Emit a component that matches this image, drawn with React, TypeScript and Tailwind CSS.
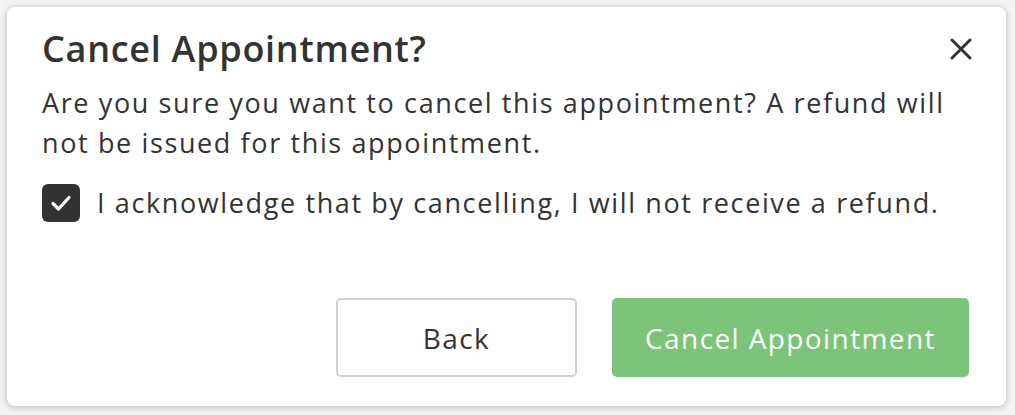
import React from 'react';

const App = () => {
  return (
    <div className="w-[1015px] h-[415px] bg-[#f3f3f3] p-[7px]" style={{ fontFamily: '"Open Sans", sans-serif' }}>
      <div className="relative w-[999px] h-[399px] bg-white rounded-[8px] shadow-[0_1px_6px_rgba(0,0,0,0.25)] pl-[35px] pr-[37px] pt-[20px] text-[#333]">
        <h2 className="text-[36px] leading-[44px] font-semibold tracking-[0.02em]">Cancel Appointment?</h2>
        <button className="absolute right-[33px] top-[30px] w-[24px] h-[24px] flex items-center justify-center">
          <svg width="22" height="22" viewBox="0 0 22 22" fill="none" stroke="#333" strokeWidth="3" strokeLinecap="round">
            <path d="M2 2 L20 20 M20 2 L2 20" />
          </svg>
        </button>
        <p className="mt-[12px] text-[27px] leading-[40px] tracking-[0.06em] pr-[10px]">
          Are you sure you want to cancel this appointment? A refund will not be issued for this appointment.
        </p>
        <label className="mt-[20px] flex items-center gap-[17px] text-[27px] leading-[40px] tracking-[0.06em]">
          <span className="w-[38px] h-[38px] shrink-0 rounded-[6px] bg-[#333] flex items-center justify-center">
            <svg width="24" height="24" viewBox="0 0 24 24" fill="none" stroke="white" strokeWidth="3.2" strokeLinecap="round" strokeLinejoin="round">
              <path d="M4 12.5 L9.5 18 L20 6.5" />
            </svg>
          </span>
          I acknowledge that by cancelling, I will not receive a refund.
        </label>
        <div className="mt-[75px] flex justify-end gap-[35px]">
          <button className="w-[241px] h-[79px] border-2 border-[#d0d0d0] rounded-[5px] text-[28px] tracking-[0.05em] text-[#333]">Back</button>
          <button className="w-[357px] h-[79px] bg-[#7bc47a] rounded-[5px] text-[28px] tracking-[0.05em] text-white">Cancel Appointment</button>
        </div>
      </div>
    </div>
  );
};

export default App;
